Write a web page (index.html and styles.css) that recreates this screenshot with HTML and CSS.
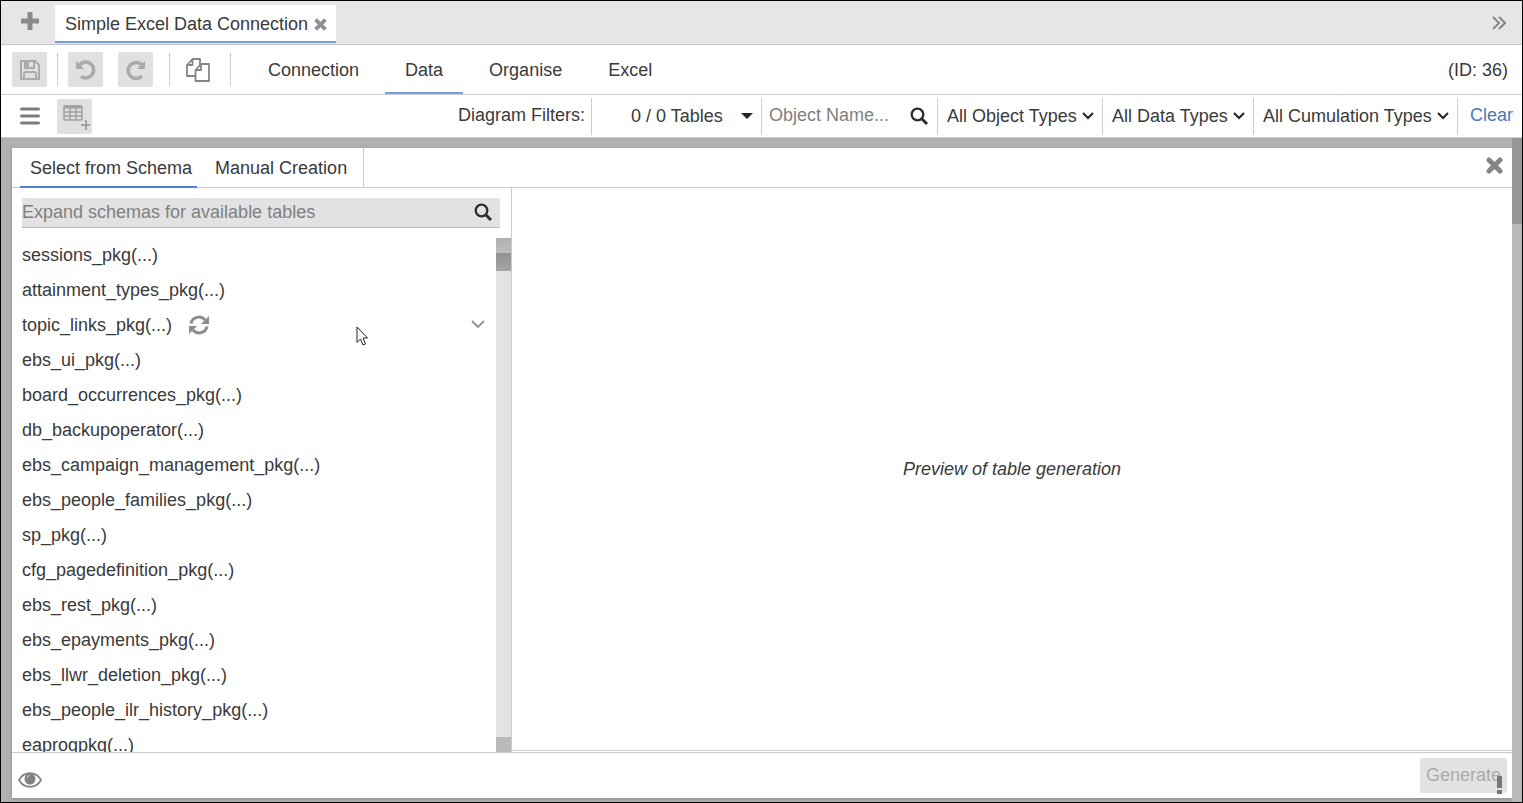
FILE: index.html
```html
<!DOCTYPE html>
<html lang="en">
<head>
<meta charset="utf-8">
<title>Simple Excel Data Connection</title>
<link rel="stylesheet" href="styles.css">
</head>
<body>
<div class="app">
  <header class="tabstrip">
    <button class="icon-btn add-tab" aria-label="New tab"><svg width="18" height="18" viewBox="0 0 18 18"><path d="M9 0v18M0 9h18" stroke="#8a8a8a" stroke-width="5"/></svg></button>
    <div class="doc-tab">
      <span>Simple Excel Data Connection</span>
      <button class="icon-btn" aria-label="Close tab"><svg width="13" height="13" viewBox="0 0 16 16"><path d="M2 2l12 12M14 2L2 14" stroke="#8f8f8f" stroke-width="4.6"/></svg></button>
    </div>
    <button class="icon-btn more-tabs" aria-label="More tabs"><svg width="14" height="14" viewBox="0 0 14 14"><path d="M1 1l6 6-6 6M7 1l6 6-6 6" fill="none" stroke="#858588" stroke-width="2"/></svg></button>
  </header>

  <div class="toolbar">
    <div class="tools">
      <button class="tool" disabled aria-label="Save"><svg width="22" height="22" viewBox="0 0 22 22" fill="none" stroke="#aaa" stroke-width="2"><path d="M2 2h14l4 4v14H2z"/><path d="M6 2v7h9V2M5 20v-5q0-2 2-2h8q2 0 2 2v5"/><path d="M8.500 2v6" stroke-width="3"/></svg></button>
      <span class="rule"></span>
      <button class="tool" disabled aria-label="Undo"><svg width="22" height="22" viewBox="0 0 22 22"><path d="M4 6.500A8 8 0 1 1 6 17.500" fill="none" stroke="#aaa" stroke-width="3.600"/><path d="M1 2v8h8z" fill="#aaa"/></svg></button>
      <button class="tool redo" disabled aria-label="Redo"><svg width="22" height="22" viewBox="0 0 22 22"><path d="M17 6A8 8 0 1 0 17 17" fill="none" stroke="#aaa" stroke-width="3.600"/><path d="M20 2v8h-8z" fill="#aaa"/></svg></button>
      <span class="rule"></span>
      <button class="icon-btn" aria-label="Copy"><svg width="24" height="24" viewBox="0 0 24 24" fill="#fff" stroke="#858585" stroke-width="1.800" stroke-linejoin="round"><path d="M6.500 1H14v17H1V7zM6.500 1v6H1"/><path d="M15 6h8v17H9.500V12zM15 6v6H9.500"/></svg></button>
      <span class="rule"></span>
    </div>
    <nav class="sections">
      <a href="#connection">Connection</a>
      <a href="#data" class="active" aria-current="page">Data</a>
      <a href="#organise">Organise</a>
      <a href="#excel">Excel</a>
    </nav>
    <span class="doc-id">(ID: 36)</span>
  </div>

  <div class="filterbar">
    <button class="icon-btn menu" aria-label="Menu"><svg width="20" height="18" viewBox="0 0 20 18"><path d="M1.500 2h17M1.500 9h17M1.500 16h17" stroke="#7d7d7d" stroke-width="3" stroke-linecap="round"/></svg></button>
    <button class="tool" disabled aria-label="Add table"><svg width="30" height="28" viewBox="0 0 30 28" fill="none" stroke="#a0a0a0"><rect x="4" y="4" width="18" height="14" rx="1" stroke-width="1.500"/><path d="M4 5h18" stroke-width="3"/><path d="M4 10h18M4 14h18M10 5v13M16 5v13" stroke-width="1.500"/><path d="M26 18v10M21 23h10" stroke-width="2"/></svg></button>
    <div class="filters">
      <label class="filters-title" for="tables">Diagram Filters:</label>
      <div class="pick tables">
        <select id="tables"><option>0 / 0 Tables</option></select>
        <svg width="12" height="6" viewBox="0 0 12 6"><path d="M0 0h12L6 6z" fill="#222"/></svg>
      </div>
      <div class="name-filter">
        <input type="text" placeholder="Object Name..." aria-label="Object name">
        <button class="icon-btn" aria-label="Search"><svg width="18" height="18" viewBox="0 0 18 18" fill="none" stroke="#2c2c2c"><circle cx="7.500" cy="7.500" r="5.800" stroke-width="2.300"/><path d="M12 12l5 5" stroke-width="3"/></svg></button>
      </div>
      <div class="pick">
        <select aria-label="Object types"><option>All Object Types</option></select>
        <svg width="12" height="8" viewBox="0 0 12 8"><path d="M1 1l5 5 5-5" fill="none" stroke="#222" stroke-width="2"/></svg>
      </div>
      <div class="pick">
        <select aria-label="Data types"><option>All Data Types</option></select>
        <svg width="12" height="8" viewBox="0 0 12 8"><path d="M1 1l5 5 5-5" fill="none" stroke="#222" stroke-width="2"/></svg>
      </div>
      <div class="pick">
        <select aria-label="Cumulation types"><option>All Cumulation Types</option></select>
        <svg width="12" height="8" viewBox="0 0 12 8"><path d="M1 1l5 5 5-5" fill="none" stroke="#222" stroke-width="2"/></svg>
      </div>
      <a class="clear" href="#clear">Clear</a>
    </div>
  </div>

  <main class="canvas">
    <section class="dialog" role="dialog" aria-label="Add table">
      <div class="dialog-head">
        <nav class="dialog-tabs">
          <a href="#schema" class="active">Select from Schema</a>
          <a href="#manual">Manual Creation</a>
        </nav>
        <button class="icon-btn" aria-label="Close"><svg width="17" height="17" viewBox="0 0 17 17"><path d="M3 3l11 11M14 3L3 14" stroke="#858585" stroke-width="5" stroke-linecap="round"/></svg></button>
      </div>
      <div class="dialog-body">
        <div class="schema">
          <div class="search">
            <input type="text" placeholder="Expand schemas for available tables" aria-label="Search tables">
            <button class="icon-btn" aria-label="Search"><svg width="18" height="18" viewBox="0 0 18 18" fill="none" stroke="#2c2c2c"><circle cx="7.500" cy="7.500" r="5.800" stroke-width="2.300"/><path d="M12 12l5 5" stroke-width="3"/></svg></button>
          </div>
          <div class="list-area">
            <ul class="list">
              <li>sessions_pkg(...)</li>
              <li>attainment_types_pkg(...)</li>
              <li class="hovered">topic_links_pkg(...)
                <button class="icon-btn" aria-label="Refresh"><svg width="20" height="20" viewBox="0 0 20 20"><path d="M2 8.500A8 8 0 0 1 16 5M18 11.500A8 8 0 0 1 4 15" fill="none" stroke="#8c8c8c" stroke-width="3"/><path d="M20 1v8h-8zM0 19v-8h8z" fill="#8c8c8c"/></svg></button>
                <button class="icon-btn expand" aria-label="Expand"><svg width="14" height="9" viewBox="0 0 14 9"><path d="M1 1l6 6 6-6" fill="none" stroke="#909090" stroke-width="1.800"/></svg></button>
              </li>
              <li>ebs_ui_pkg(...)</li>
              <li>board_occurrences_pkg(...)</li>
              <li>db_backupoperator(...)</li>
              <li>ebs_campaign_management_pkg(...)</li>
              <li>ebs_people_families_pkg(...)</li>
              <li>sp_pkg(...)</li>
              <li>cfg_pagedefinition_pkg(...)</li>
              <li>ebs_rest_pkg(...)</li>
              <li>ebs_epayments_pkg(...)</li>
              <li>ebs_llwr_deletion_pkg(...)</li>
              <li>ebs_people_ilr_history_pkg(...)</li>
              <li>eaprogpkg(...)</li>
            </ul>
            <div class="scrollbar"><span class="step up"></span><span class="thumb"></span><span class="step down"></span></div>
          </div>
        </div>
        <div class="preview"><p>Preview of table generation</p></div>
      </div>
      <footer class="dialog-foot">
        <button class="icon-btn" aria-label="Preview"><svg width="24" height="16" viewBox="0 0 24 16"><path d="M1 8C6-1 18-1 23 8C18 17 6 17 1 8z" fill="none" stroke="#858585" stroke-width="1.800"/><circle cx="12" cy="7" r="5.500" fill="#808080"/><path d="M9 6.500A3 3 0 0 1 12 3.500" fill="none" stroke="#ccc"/></svg></button>
        <button class="generate" disabled>Generate</button>
      </footer>
    </section>
    <div class="page-scroll"></div>
    <svg class="alert" width="5" height="18" viewBox="0 0 5 18"><path d="M0 0h5v12H0zM0 14h5v4H0z" fill="#777"/></svg>
  </main>
  <svg class="pointer" width="12" height="20" viewBox="0 0 12 20"><path d="M1 1v15.500l3.500-3.500 2.500 6 2.500-1-2.500-6h4.500z" fill="#fff" stroke="#222"/></svg>
</div>
</body>
</html>
```
FILE: styles.css
```css
* { box-sizing: border-box; }
body {
  margin: 0;
  font: 18px/24px "Liberation Sans", Arial, sans-serif;
  color: #3a3a3a;
}
button, input, select { font: inherit; color: inherit; }
a { color: inherit; text-decoration: none; }
svg { display: block; flex: none; }
.app {
  height: 100vh;
  display: flex;
  flex-direction: column;
  border: 1px solid #000;
  background: #fff;
  overflow: hidden;
  position: relative;
}
.icon-btn {
  display: flex;
  align-items: center;
  padding: 0;
  border: 0;
  background: none;
}
.tabstrip {
  flex: none;
  display: flex;
  align-items: center;
  height: 44px;
  padding: 0 16px 0 20px;
  background: #e6e6e6;
  border-bottom: 1px solid #c6c6c6;
}
.add-tab { margin-right: 16px; padding-bottom: 4px; }
.doc-tab {
  display: flex;
  align-items: center;
  align-self: flex-end;
  gap: 6px;
  height: 38px;
  margin-bottom: 1px;
  padding: 2px 9px 0 10px;
  background: #fff;
  border-bottom: 2px solid #7c9de0;
}
.more-tabs { margin-left: auto; }

.toolbar {
  flex: none;
  display: flex;
  height: 50px;
  padding: 0 14px 0 11px;
  border-bottom: 1px solid #ccc;
}
.tools { display: flex; align-items: center; }
.tool {
  display: flex;
  align-items: center;
  justify-content: center;
  width: 35px;
  height: 35px;
  padding: 0;
  border: 0;
  border-radius: 2px;
  background: #e0e0e0;
}
.rule { width: 1px; height: 33px; margin: 0 10px; background: #ccc; }
.redo { margin-left: 15px; }
.tools .redo + .rule { margin: 0 16px; }
.tools .icon-btn + .rule { margin: 0 17px 0 20px; }
.sections { display: flex; gap: 6px; }
.sections a {
  display: flex;
  align-items: center;
  padding: 2px 20px 0;
  border-bottom: 2px solid transparent;
}
.sections .active { border-color: #7c9de0; }
.doc-id { margin-left: auto; align-self: center; }

.filterbar {
  flex: none;
  display: flex;
  align-items: center;
  height: 43px;
  padding-left: 19px;
  border-bottom: 1px solid #ccc;
}
.menu { margin-right: 17px; }
.filters { display: flex; align-items: center; margin-left: auto; }
.filters-title { margin-right: 6px; padding-bottom: 2px; }
.pick, .name-filter { height: 37px; border-left: 1px solid #ccc; }
.pick { display: grid; align-items: center; }
.pick > * { grid-area: 1 / 1; }
.pick select {
  appearance: none;
  height: 36px;
  padding: 0 24px 0 9px;
  border: 0;
  background: none;
}
.pick svg { justify-self: end; margin-right: 8px; pointer-events: none; }
.tables select { padding: 0 37px 0 39px; }
.name-filter { display: flex; align-items: center; width: 176px; padding: 0 9px 0 7px; }
.name-filter input { flex: 1; min-width: 0; padding: 0 0 2px; border: 0; background: none; }
::placeholder { color: #7f7f7f; opacity: 1; }
.clear { display: flex; align-items: center; height: 37px; padding: 0 9px 2px 12px; border-left: 1px solid #ccc; color: #4a7ab5; }

.canvas {
  flex: 1;
  min-height: 0;
  display: flex;
  padding: 10px 0 4px 11px;
  background: #b0b0b0;
  position: relative;
}
.dialog {
  flex: 1;
  display: flex;
  flex-direction: column;
  min-width: 0;
  background: #fff;
  box-shadow: 0 1px 3px #888;
}
.page-scroll {
  width: 10px;
  margin-top: -10px;
  margin-bottom: -4px;
  background: linear-gradient(#979797 86px, #b9b9b9 86px);
}
.dialog-head {
  flex: none;
  display: flex;
  justify-content: space-between;
  height: 40px;
  padding: 0 9px 0 8px;
  border-bottom: 1px solid #ccc;
}
.dialog-head > .icon-btn { padding-bottom: 4px; }
.dialog-tabs { display: flex; gap: 8px; height: 40px; padding-right: 6px; border-right: 1px solid #ccc; }
.dialog-tabs a { display: flex; align-items: center; padding: 2px 10px 0; border-bottom: 2px solid transparent; }
.dialog-tabs .active { padding-right: 5px; border-color: #4e82d8; }
.dialog-body { flex: 1; min-height: 0; display: flex; }
.schema {
  flex: none;
  width: 500px;
  display: flex;
  flex-direction: column;
  padding-top: 10px;
  border-right: 1px solid #ccc;
}
.search {
  flex: none;
  display: flex;
  align-items: center;
  height: 30px;
  margin: 0 11px 10px 10px;
  padding: 0 8px 2px 0;
  background: #e2e2e2;
  border-bottom: 1px solid #bbb;
}
.search input { flex: 1; min-width: 0; padding: 0; border: 0; background: none; }
.list-area { flex: 1; min-height: 0; display: flex; }
.list { flex: 1; margin: 0; padding: 0 0 0 10px; list-style: none; overflow: hidden; }
.list li { display: flex; align-items: center; height: 35px; padding-bottom: 2px; }
.hovered { gap: 17px; }
.expand { margin: 0 11px 0 auto; }
.scrollbar { width: 15px; display: flex; flex-direction: column; background: #e3e3e3; }
.step { height: 15px; background: #b9b9b9; }
.up { background: linear-gradient(#b0b0b0, #bdbdbd); }
.thumb { height: 18px; background: linear-gradient(#929292, #a5a5a5); }
.down { margin-top: auto; }
.preview {
  flex: 1;
  display: flex;
  align-items: center;
  justify-content: center;
  margin-bottom: 1px;
  border-bottom: 1px solid #ccc;
  font-style: italic;
}
.preview p { margin: 0; }
.dialog-foot {
  flex: none;
  display: flex;
  align-items: center;
  justify-content: space-between;
  height: 46px;
  padding: 0 5px 0 6px;
  border-top: 1px solid #ccc;
}
.dialog-foot .icon-btn { padding-top: 8px; }
.generate { height: 35px; padding: 0 6px 2px; border: 0; border-radius: 3px; background: #e2e2e2; color: #aaa; }
.alert { position: absolute; right: 20px; bottom: 8px; }
.pointer { position: absolute; left: 355px; top: 325px; }
```
